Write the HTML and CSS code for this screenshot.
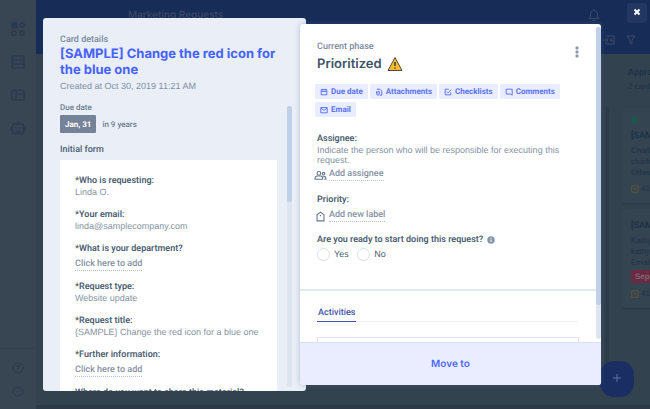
FILE: index.html
```
<!DOCTYPE html>
<html lang="en">
<head>
    <meta charset="UTF-8">
    <meta name="viewport" content="width=device-width, initial-scale=1.0">
    <title>Marketing Requests</title>
    <link rel="stylesheet" href="styles.css">
</head>
<body>
    <div class="app">
        <nav class="sidebar">
            <svg class="nav-icon" viewBox="0 0 16 16"><rect x="2" y="2" width="5" height="5" rx="1" fill="currentColor"/><rect x="10" y="2" width="4" height="4" rx="1"/><rect x="2" y="10" width="4" height="4" rx="1"/><rect x="10" y="10" width="4" height="4" rx="1"/></svg>
            <svg class="nav-icon" viewBox="0 0 16 16"><rect x="2" y="2" width="12" height="12" rx="1"/><path d="M2 6h12M2 10h12"/></svg>
            <svg class="nav-icon" viewBox="0 0 16 16"><rect x="2" y="3" width="12" height="10" rx="1"/><path d="M6 3v10M6 7h8"/></svg>
            <svg class="nav-icon" viewBox="0 0 16 16"><rect x="2.500" y="4" width="11" height="9.500" rx="1"/><path d="M8 4V1M.8 7v4M15.200 7v4M5.700 7v1.500M10.300 7v1.500M5.500 11.500h5"/></svg>
            <div class="sidebar-bottom">
                <svg class="help-icon" viewBox="0 0 14 14"><circle cx="7" cy="7" r="5"/><path d="M5.500 6q0-1.500 1.500-1.500T8.500 6Q8.500 6.800 7 7.500v.5M7 9.300v.7"/></svg>
                <svg class="help-icon" viewBox="0 0 14 14"><path d="M7 2.500c3 0 5 1.700 5 4s-2 4-5 4l-1 1-1-1.300C3 9.600 2 8.300 2 6.500c0-2.300 2-4 5-4zM4.500 6.500h1M6.500 6.500h1M8.500 6.500h1"/></svg>
            </div>
        </nav>
        <main class="workspace">
            <header class="topbar">
                <div class="topbar-row">
                    <span class="pipe-name">Marketing Requests</span>
                    <svg class="bell" viewBox="0 0 14 14"><path d="M2 10.500h10L10.500 9V6a3.500 3.500 0 0 0-7 0v3zM6 12.500h2M7 1v1.500"/></svg>
                </div>
                <div class="topbar-row tools">
                    <svg viewBox="0 0 14 14"><path d="M4 3h8v8H4V9M1 7h5M4 5l2 2-2 2M9 5v3h2"/></svg>
                    <svg viewBox="0 0 14 14"><path d="M3 3h8L8 7v4L6 10V7z"/></svg>
                </div>
            </header>
            <div class="board">
                <div class="phase-track"></div>
                <section class="phase">
                    <h3>Approved</h3>
                    <p class="count">2 cards</p>
                    <div class="card">
                        <span class="tag"></span>
                        <h4>[SAMPLE]</h4>
                        <p>Charles<br>charles@<br>Others</p>
                        <div class="age"><svg viewBox="0 0 10 10"><rect x="1" y="1" width="8" height="8"/><path d="M5 3v3h2"/></svg>41d</div>
                    </div>
                    <div class="card">
                        <h4>[SAMPLE]</h4>
                        <p>Kathy<br>kathy@<br>Email</p>
                        <span class="late">Sep, 30</span>
                        <div class="age"><svg viewBox="0 0 10 10"><rect x="1" y="1" width="8" height="8"/><path d="M5 3v3h2"/></svg>41d</div>
                    </div>
                </section>
            </div>
        </main>
    </div>
    <button class="add-card" aria-label="Create new card"><svg viewBox="0 0 10 10"><path d="M5 1v8M1 5h8"/></svg></button>
    <button class="close" aria-label="Close"><svg viewBox="0 0 8 8"><path d="M1.500 1.500l5 5M6.500 1.500l-5 5"/></svg></button>

    <div class="modal">
        <section class="details">
            <div class="details-head">
                <p class="caption">Card details</p>
                <h1>[SAMPLE] Change the red icon for the blue one</h1>
                <p class="created">Created at Oct 30, 2019 11:21 AM</p>
            </div>
            <div class="details-body">
                <div class="details-content">
                    <p class="due-label">Due date</p>
                    <div class="due">
                        <button class="due-date">Jan, 31</button>
                        <span>in 9 years</span>
                    </div>
                    <h2 class="form-title">Initial form</h2>
                    <dl class="form-card">
                        <dt>*Who is requesting:</dt>
                        <dd>Linda O.</dd>
                        <dt>*Your email:</dt>
                        <dd>linda@samplecompany.com</dd>
                        <dt>*What is your department?</dt>
                        <dd class="empty"><a class="add-link" href="#">Click here to add</a></dd>
                        <dt>*Request type:</dt>
                        <dd>Website update</dd>
                        <dt>*Request title:</dt>
                        <dd>{SAMPLE} Change the red icon for a blue one</dd>
                        <dt>*Further information:</dt>
                        <dd class="empty"><a class="add-link" href="#">Click here to add</a></dd>
                        <dt>Where do you want to share this material?</dt>
                    </dl>
                </div>
                <div class="scrollbar"><div class="thumb details-thumb"></div></div>
            </div>
        </section>

        <section class="phase-panel">
            <div class="panel-body">
                <div class="panel-content">
                    <div class="current">
                        <div class="current-head">
                            <div>
                                <p class="caption">Current phase</p>
                                <h2 class="phase-name">Prioritized
                                    <svg viewBox="0 0 16 16"><path d="M8 1.500L15 14.500H1z" fill="#fbbc2c" stroke="#4d4a45" stroke-linejoin="round"/><path d="M8 6v4M8 11.500v1.300" stroke="#3c3a37" stroke-width="1.500" fill="none"/></svg>
                                </h2>
                            </div>
                            <button class="more" aria-label="More options"><svg viewBox="0 0 4 12"><rect x=".5" y=".5" width="3" height="3" rx="1"/><rect x=".5" y="4.500" width="3" height="3" rx="1"/><rect x=".5" y="8.500" width="3" height="3" rx="1"/></svg></button>
                        </div>
                        <div class="actions">
                            <button><svg viewBox="0 0 10 10"><path d="M1.500 2h7v6.500h-7zM1.500 4.300h7M3.300 1v2M6.700 1v2"/></svg>Due date</button>
                            <button><svg viewBox="0 0 10 10"><path d="M2.500 2V1.500H6L8.500 4v5H6M2 4v3.200a1.700 1.700 0 0 0 3.400 0V4.500a1 1 0 0 0-1.800 0V7"/></svg>Attachments</button>
                            <button><svg viewBox="0 0 10 10"><path d="M6 1.500H1.500v7h7V5.500M3.500 4.500l1.500 1.500L9 2"/></svg>Checklists</button>
                            <button><svg viewBox="0 0 10 10"><path d="M1.500 1.500h7.500v7.500L7 7.500H1.500z"/></svg>Comments</button>
                            <button><svg viewBox="0 0 10 10"><path d="M1 2h8v6.500H1zM1 2.500l4 3 4-3"/></svg>Email</button>
                        </div>
                        <div class="field">
                            <h3>Assignee:</h3>
                            <p>Indicate the person who will be responsible for executing this request.</p>
                            <div class="add-row">
                                <svg class="people" viewBox="0 0 12 10"><circle cx="4.500" cy="3" r="1.700"/><path d="M1 8.500v-1q0-2 2-2h3q2 0 2 2v1z"/><circle cx="8.800" cy="3.300" r="1.200"/><path d="M8.500 6h1q1.500 0 1.500 1.500v1H9.500"/></svg>
                                <a class="add-link" href="#">Add assignee</a>
                            </div>
                        </div>
                        <div class="field">
                            <h3>Priority:</h3>
                            <div class="add-row">
                                <svg class="label" viewBox="0 0 12 10"><path d="M2.800 9V3.500L6 1l3.200 2.500V9z"/><path d="M6 3.500v1.200"/></svg>
                                <a class="add-link" href="#">Add new label</a>
                            </div>
                        </div>
                        <fieldset class="ready">
                            <legend>Are you ready to start doing this request? <svg viewBox="0 0 8 8"><circle cx="4" cy="4" r="3.700"/><path d="M4 3.500v2.500M4 1.800v1" stroke="#fff"/></svg></legend>
                            <label><input type="radio" name="ready">Yes</label>
                            <label><input type="radio" name="ready">No</label>
                        </fieldset>
                    </div>
                    <div class="activities">
                        <div class="tabs"><button class="tab">Activities</button></div>
                        <input class="comment" type="text" aria-label="Write a comment">
                    </div>
                </div>
                <div class="scrollbar"><div class="thumb panel-thumb"></div></div>
            </div>
            <button class="move">Move to</button>
        </section>
    </div>
</body>
</html>
```
FILE: styles.css
```
* {
    box-sizing: border-box;
}

:root {
    --text: "Liberation Sans", Arial, sans-serif;
    --label: Roboto, "Liberation Sans", sans-serif;
    --title: Inter, "Liberation Sans", sans-serif;
}

body {
    margin: 0;
    height: 100vh;
    overflow: hidden;
    font-family: var(--text);
    font-size: 9px;
    line-height: 11px;
    text-rendering: geometricPrecision;
    color: #4c6072;
    background-color: #33424f;
}

h1, h2, h3, h4, p, dl, dd, fieldset {
    margin: 0;
    padding: 0;
    border: none;
}

button {
    font: inherit;
    text-rendering: inherit;
    border: none;
    padding: 0;
    cursor: pointer;
}

h3, h4, dt, legend, button, .caption, .due, .due-label, .form-title, .add-link {
    font-family: var(--label);
}

svg {
    fill: none;
    stroke: currentColor;
    flex: none;
}

/* board behind the modal */
.app {
    display: flex;
    height: 100%;
}

.sidebar {
    width: 36px;
    display: flex;
    flex-direction: column;
    align-items: center;
    gap: 17px;
    padding: 21px 0 10px;
    color: #293b4f;
    background-color: #384653;
}

.nav-icon {
    width: 16px;
    height: 16px;
    stroke-width: 1.5;
}

.sidebar-bottom {
    display: flex;
    flex-direction: column;
    align-items: center;
    gap: 10px;
    width: 100%;
    margin-top: auto;
    padding-top: 12px;
    border-top: 1px solid #33414e;
}

.help-icon {
    width: 14px;
    height: 14px;
}

.workspace {
    flex: 1;
    min-width: 0;
    display: flex;
    flex-direction: column;
    border-bottom: 4px solid #2c3a48;
}

.topbar {
    height: 54px;
    padding: 8px 12px 0 92px;
    color: #3a4a68;
    background-color: #182c58;
}

.topbar-row {
    display: flex;
    align-items: center;
    justify-content: space-between;
    padding-right: 37px;
}

.topbar-row svg {
    width: 14px;
    height: 14px;
}

.pipe-name {
    font-family: var(--title);
    font-size: 10px;
    font-weight: 500;
}

.tools {
    justify-content: flex-end;
    gap: 8px;
    margin-top: 11px;
    padding-right: 0;
}

.board {
    flex: 1;
    min-height: 0;
    display: flex;
    justify-content: flex-end;
    gap: 13px;
    color: #1e3247;
}

.phase-track {
    width: 4px;
    margin: 53px 0 40px;
    border-radius: 2px;
    background-color: #2e3c49;
}

.phase {
    width: 28px;
    padding-top: 13px;
    overflow: hidden;
    white-space: nowrap;
}

.phase h3 {
    padding-left: 6px;
    font-size: 9px;
    line-height: 13px;
    font-weight: 600;
}

.phase .count {
    margin-bottom: 15px;
    padding-left: 6px;
    font-size: 8px;
    line-height: 13px;
}

.card {
    width: 120px;
    min-height: 94px;
    margin-bottom: 6px;
    padding: 9px;
    border-radius: 3px;
    background-color: #354451;
    box-shadow: 0 1px 2px #2c3a47;
    font-size: 8px;
}

.card + .card {
    padding-top: 12px;
}

.card h4 {
    margin-bottom: 3px;
    font-size: 9px;
    font-weight: 600;
}

.tag {
    display: block;
    width: 6px;
    height: 6px;
    margin-bottom: 8px;
    border-radius: 2px;
    background-color: #17574f;
}

.late {
    display: inline-block;
    margin-top: 2px;
    padding: 1px 4px;
    border-radius: 2px;
    color: #7b6876;
    background-color: #6b2a40;
    font-weight: 600;
}

.age {
    display: flex;
    align-items: center;
    gap: 2px;
    margin-top: 5px;
}

.age svg {
    width: 8px;
    height: 8px;
    color: #6a5738;
}

.add-card {
    position: absolute;
    right: 16px;
    bottom: 12px;
    width: 34px;
    height: 36px;
    border-radius: 14px;
    color: #60709a;
    background-color: #1b2e63;
}

.add-card svg {
    width: 10px;
    height: 10px;
    vertical-align: middle;
}

.close {
    position: absolute;
    top: 3px;
    right: 3px;
    width: 20px;
    height: 20px;
    border-radius: 3px;
    color: #fff;
    background-color: #233760;
}

.close svg {
    width: 8px;
    height: 8px;
    stroke-width: 2;
    vertical-align: middle;
}

/* modal */
.modal {
    position: absolute;
    inset: 0;
    display: flex;
    padding: 18px 49px 18px 43px;
    pointer-events: none;
}

.modal > section {
    display: flex;
    flex-direction: column;
    min-width: 0;
    border-radius: 3px;
    overflow: hidden;
    pointer-events: auto;
}

.details {
    flex: 263 1 0;
    background-color: #e9eef7;
}

.details-head {
    padding: 16px 17px 10px;
}

.caption {
    font-weight: 500;
    line-height: 12px;
    color: #7a8b9d;
}

.details h1 {
    font-family: var(--title);
    font-size: 13px;
    line-height: 16px;
    font-weight: 700;
    color: #4662ff;
}

.created {
    margin-top: 2px;
    line-height: 12px;
    color: #8391a5;
}

.details-body {
    flex: 1;
    min-height: 0;
    display: flex;
    justify-content: space-between;
    padding: 0 14px 0 17px;
}

.details-content {
    flex: 1;
    margin-right: 10px;
    overflow: hidden;
}

.scrollbar {
    width: 5px;
    border-radius: 3px;
    background-color: #dce5f0;
}

.details .scrollbar {
    margin: 4px 0;
}

.thumb {
    border-radius: 3px;
    background-color: #bfd0e8;
}

.details-thumb {
    height: 34%;
}

.due-label {
    font-size: 8px;
    font-weight: 500;
    color: #6b7d90;
}

.due {
    display: flex;
    align-items: center;
    gap: 6px;
    margin: 2px 0 12px;
    font-size: 8px;
    font-weight: 500;
    color: #6b7d90;
}

.due-date {
    height: 18px;
    padding: 0 5px;
    border-radius: 1px;
    color: #fff;
    background-color: #748398;
    font-weight: 700;
}

.form-title {
    margin-bottom: 4px;
    font-size: 9px;
    font-weight: 500;
}

.form-card {
    padding: 16px 15px;
    background-color: #fff;
}

dt {
    font-weight: 600;
}

dd {
    margin-bottom: 12px;
    color: #8593a3;
}

.empty {
    padding-top: 4px;
}

.add-link {
    display: inline-block;
    color: #8593a3;
    font-weight: 500;
    text-decoration: none;
    border-bottom: 1px dotted #b6c0cc;
}

.empty .add-link {
    margin-bottom: -1px;
    vertical-align: top;
}

.phase-panel {
    flex: 301 1 0;
    margin: 6px 0 6px -6px;
    background-color: #fff;
    box-shadow: 0 0 5px rgba(80, 110, 150, 0.4);
}

.panel-body {
    flex: 1;
    min-height: 0;
    display: flex;
}

.panel-body .scrollbar {
    margin: 3px 0;
}

.panel-thumb {
    height: 89%;
}

.panel-content {
    flex: 1;
    min-width: 0;
    overflow: hidden;
}

.current {
    padding: 17px 17px 25px;
    border-bottom: 2px solid #dfe8f3;
}

.current-head {
    display: flex;
    justify-content: space-between;
    align-items: flex-start;
}

.phase-name {
    display: flex;
    align-items: center;
    gap: 5px;
    margin-top: 2px;
    font-family: var(--title);
    font-size: 13px;
    line-height: 18px;
    font-weight: 600;
    color: #3f5368;
}

.phase-name svg {
    width: 16px;
    height: 16px;
}

.more {
    width: 4px;
    height: 12px;
    margin-top: 5px;
    background: none;
}

.more svg {
    display: block;
    fill: #8796aa;
    stroke: none;
}

.actions {
    display: flex;
    flex-wrap: wrap;
    gap: 3px 2px;
    margin: 11px 0 16px -2px;
}

.actions button {
    display: flex;
    align-items: center;
    gap: 3px;
    height: 15px;
    padding: 0 5px;
    border-radius: 1px;
    color: #5a72f8;
    background-color: #e9edff;
    font-size: 8px;
    font-weight: 700;
}

.actions svg {
    width: 8px;
    height: 8px;
    stroke-width: 1.2;
}

.field {
    margin-bottom: 13px;
}

.field h3 {
    font-size: 9px;
    line-height: 12px;
    font-weight: 600;
}

.field p {
    line-height: 10px;
    color: #8593a3;
}

.add-row {
    display: flex;
    align-items: center;
    gap: 2px;
    margin: 4px 0 0 -3px;
}

.add-row svg {
    width: 13px;
    height: 11px;
    color: #66788c;
}

.ready legend {
    padding: 0;
    font-weight: 600;
}

.ready legend svg {
    width: 8px;
    height: 8px;
    margin-left: 2px;
    vertical-align: middle;
    fill: #8295a9;
    stroke: none;
}

.ready label {
    display: inline-flex;
    align-items: center;
    gap: 4px;
    margin: 2px 6px 0 0;
}

.ready input {
    appearance: none;
    width: 13px;
    height: 13px;
    margin: 0;
    border: 1px solid #d3dff0;
    border-radius: 50%;
}

.activities {
    padding: 14px 17px 0;
}

.tabs {
    border-bottom: 1px solid #edf1f6;
}

.tab {
    display: block;
    margin-bottom: -1px;
    padding: 3px 1px 2px;
    color: #4254a8;
    background: none;
    border-bottom: 1px solid #4254a8;
    font-weight: 500;
}

.comment {
    display: block;
    width: 100%;
    height: 36px;
    margin-top: 15px;
    border: 1px solid #d9e4f0;
}

.move {
    flex: none;
    height: 43px;
    border-top: 1px solid #d6e0f2;
    color: #4f68fa;
    background-color: #e9edff;
    font-family: var(--title);
    font-size: 10px;
    font-weight: 600;
}
```
